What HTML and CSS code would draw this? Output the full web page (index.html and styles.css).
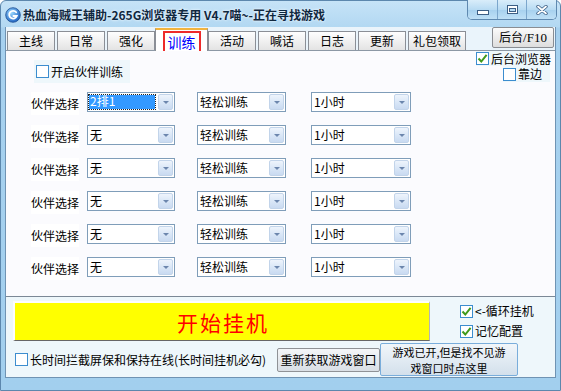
FILE: index.html
```html
<!DOCTYPE html>
<html>
<head>
    <title>热血海贼王辅助</title>
    <link rel="stylesheet" href="styles.css">
</head>
<body>
<div class="window">
    <div class="titlebar">
        <span class="app-icon">
            <svg width="16" height="16" viewBox="0 0 16 16">
                <defs>
                    <radialGradient id="ig" cx="40%" cy="35%" r="70%">
                        <stop offset="0" stop-color="#9ad8ff"/>
                        <stop offset="1" stop-color="#1b5fc0"/>
                    </radialGradient>
                </defs>
                <circle cx="8" cy="8" r="7.3" fill="url(#ig)" stroke="#1d4f92" stroke-width="0.8"/>
                <path d="M11.2 5.3 A3.9 3.9 0 1 0 11.8 9 H8.4" fill="none" stroke="#fff" stroke-width="1.8" stroke-linecap="round"/>
            </svg>
        </span>
        <span class="title">热血海贼王辅助-265G浏览器专用 V4.7喵~-正在寻找游戏</span>
        <div class="caption-buttons">
            <span class="cap cap-min">
                <svg width="12" height="6"><rect x="0.5" y="0.5" width="11" height="4" fill="#fff" stroke="#3d5f85"/></svg>
            </span>
            <span class="cap cap-max">
                <svg width="11" height="9">
                    <rect x="0.5" y="0.5" width="10" height="8" fill="#fff" stroke="#3d5f85"/>
                    <rect x="2.5" y="3.5" width="6" height="3" fill="#b8dcf4" stroke="#3d5f85"/>
                </svg>
            </span>
            <span class="cap cap-close">
                <svg width="12" height="10">
                    <path d="M2 1.5 L10 8.5 M10 1.5 L2 8.5" stroke="#3d5f85" stroke-width="3.4" stroke-linecap="round"/>
                    <path d="M2 1.5 L10 8.5 M10 1.5 L2 8.5" stroke="#fff" stroke-width="1.8" stroke-linecap="round"/>
                </svg>
            </span>
        </div>
    </div>

    <div class="client">
        <div class="tabbar">
            <div class="tabs">
                <span class="tab">主线</span>
                <span class="tab">日常</span>
                <span class="tab">强化</span>
                <span class="tab active"><span class="focus">训练</span></span>
                <span class="tab">活动</span>
                <span class="tab">喊话</span>
                <span class="tab">日志</span>
                <span class="tab">更新</span>
                <span class="tab wide">礼包领取</span>
            </div>
            <button class="btn btn-f10">后台<span class="latin">/F10</span></button>
        </div>

        <div class="page">
            <div class="page-top">
                <label class="check check-partner">
                    <span class="box"></span>开启伙伴训练
                </label>
                <div class="side-opts">
                    <label class="check check-browser">
                        <span class="box"><svg width="11" height="11"><polyline points="1.5,5.5 4.3,8.5 9.6,1.8" fill="none" stroke="#3f9a1c" stroke-width="2"/></svg></span>后台浏览器
                    </label>
                    <label class="check check-edge">
                        <span class="box"></span>靠边
                    </label>
                </div>
            </div>

            <div class="rows">
                <div class="row">
                    <span class="row-label">伙伴选择</span>
                    <span class="combo combo-partner"><span class="combo-text selected">2排1</span><span class="combo-btn"></span></span>
                    <span class="combo combo-mode"><span class="combo-text">轻松训练</span><span class="combo-btn"></span></span>
                    <span class="combo combo-time"><span class="combo-text">1小时</span><span class="combo-btn"></span></span>
                </div>
                <div class="row">
                    <span class="row-label">伙伴选择</span>
                    <span class="combo combo-partner"><span class="combo-text">无</span><span class="combo-btn"></span></span>
                    <span class="combo combo-mode"><span class="combo-text">轻松训练</span><span class="combo-btn"></span></span>
                    <span class="combo combo-time"><span class="combo-text">1小时</span><span class="combo-btn"></span></span>
                </div>
                <div class="row">
                    <span class="row-label">伙伴选择</span>
                    <span class="combo combo-partner"><span class="combo-text">无</span><span class="combo-btn"></span></span>
                    <span class="combo combo-mode"><span class="combo-text">轻松训练</span><span class="combo-btn"></span></span>
                    <span class="combo combo-time"><span class="combo-text">1小时</span><span class="combo-btn"></span></span>
                </div>
                <div class="row">
                    <span class="row-label">伙伴选择</span>
                    <span class="combo combo-partner"><span class="combo-text">无</span><span class="combo-btn"></span></span>
                    <span class="combo combo-mode"><span class="combo-text">轻松训练</span><span class="combo-btn"></span></span>
                    <span class="combo combo-time"><span class="combo-text">1小时</span><span class="combo-btn"></span></span>
                </div>
                <div class="row">
                    <span class="row-label">伙伴选择</span>
                    <span class="combo combo-partner"><span class="combo-text">无</span><span class="combo-btn"></span></span>
                    <span class="combo combo-mode"><span class="combo-text">轻松训练</span><span class="combo-btn"></span></span>
                    <span class="combo combo-time"><span class="combo-text">1小时</span><span class="combo-btn"></span></span>
                </div>
                <div class="row">
                    <span class="row-label">伙伴选择</span>
                    <span class="combo combo-partner"><span class="combo-text">无</span><span class="combo-btn"></span></span>
                    <span class="combo combo-mode"><span class="combo-text">轻松训练</span><span class="combo-btn"></span></span>
                    <span class="combo combo-time"><span class="combo-text">1小时</span><span class="combo-btn"></span></span>
                </div>
            </div>
        </div>

        <div class="bottom">
            <div class="bottom-top">
                <button class="start">开始挂机</button>
                <div class="bottom-checks">
                    <label class="check">
                        <span class="box"><svg width="11" height="11"><polyline points="1.5,5.5 4.3,8.5 9.6,1.8" fill="none" stroke="#3f9a1c" stroke-width="2"/></svg></span>&lt;-循环挂机
                    </label>
                    <label class="check">
                        <span class="box"><svg width="11" height="11"><polyline points="1.5,5.5 4.3,8.5 9.6,1.8" fill="none" stroke="#3f9a1c" stroke-width="2"/></svg></span>记忆配置
                    </label>
                </div>
            </div>
            <div class="bottom-bar">
                <label class="check check-long">
                    <span class="box"></span>长时间拦截屏保和保持在线(长时间挂机必勾)
                </label>
                <button class="btn btn-refetch">重新获取游戏窗口</button>
                <button class="btn btn-find">游戏已开,但是找不见游<br>戏窗口时点这里</button>
            </div>
        </div>
    </div>
</div>
</body>
</html>
```

FILE: styles.css
```css
* {
    box-sizing: border-box;
}

body {
    margin: 0;
    background: #ffffff;
    font-family: "Noto Sans CJK SC", "Liberation Sans", sans-serif;
    font-size: 12px;
    color: #000;
}

.window {
    width: 561px;
    height: 391px;
    display: flex;
    flex-direction: column;
    padding: 0 4px 12px 4px;
    background: linear-gradient(to bottom, #c6e3f7, #b2d8f2 26px, #a7d1ef 27px, #a2cfee);
    border: 1px solid #5c87ad;
    border-radius: 6px 6px 0 0;
}

/* title bar */
.titlebar {
    height: 26px;
    display: flex;
    align-items: flex-start;
}

.app-icon {
    margin-top: 6px;
    width: 16px;
    height: 16px;
}

.app-icon svg {
    display: block;
}

.title {
    margin: 5px 0 0 2px;
    line-height: 17px;
    font-weight: bold;
    font-size: 12px;
    color: #10283f;
    text-shadow: 0 0 3px #e8f5ff, 0 0 2px #e8f5ff;
    white-space: nowrap;
}

.caption-buttons {
    margin: -1px -1px 0 auto;
    display: flex;
    border: 1px solid #5f89b0;
    border-top: none;
    border-radius: 0 0 5px 5px;
    overflow: hidden;
    box-shadow: inset 0 0 0 1px rgba(255,255,255,0.5);
}

.cap {
    height: 19px;
    display: flex;
    align-items: center;
    justify-content: center;
    background: linear-gradient(to bottom, #d9edfa, #b8dbf3 50%, #a6d0ee 51%, #bfe0f6);
    border-left: 1px solid #7ba6cc;
}

.cap:first-child {
    border-left: none;
}

.cap svg {
    display: block;
}

.cap-min {
    width: 29px;
    padding-top: 6px;
}

.cap-max {
    width: 29px;
}

.cap-close {
    width: 30px;
}

/* client */
.client {
    flex: 1;
    display: flex;
    flex-direction: column;
    border-left: 1px solid #6f93b3;
    border-right: 1px solid #6f93b3;
    border-bottom: 1px solid #6f93b3;
}

.tabbar {
    height: 23px;
    display: flex;
    align-items: flex-end;
    background: #eaf4fb;
}

.tabs {
    display: flex;
    align-items: flex-end;
    padding-left: 1px;
    position: relative;
    z-index: 1;
}

.tab {
    width: 48px;
    height: 19px;
    margin-right: 2px;
    line-height: 18px;
    text-align: center;
    border: 1px solid #8b8f96;
    border-bottom: none;
    background: linear-gradient(to bottom, #fefefe, #f1f1f1 50%, #e3e3e3);
}

.tab.wide {
    width: 58px;
}

.tab.active {
    width: 53px;
    height: 23px;
    margin: 0 0 -1px -2px;
    background: #ffffff;
    border-top: 2px solid #f1b33e;
    display: flex;
    justify-content: center;
    padding-top: 1px;
}

.focus {
    display: block;
    width: 38px;
    border: 2px solid #ee2a2a;
    border-bottom: none;
    color: #0000ff;
    font-size: 14px;
    line-height: 18px;
}

.btn {
    font-family: "Noto Sans CJK SC", "Liberation Sans", sans-serif;
    font-size: 12px;
    color: #000;
    padding: 0;
    cursor: pointer;
}

.btn-f10 {
    width: 62px;
    height: 21px;
    margin: 0 1px 2px auto;
    line-height: 18px;
    border: 1px solid #8a8d92;
    border-radius: 2px;
    background: linear-gradient(to bottom, #fbfbfb, #ececec 50%, #dedede);
}

.latin {
    font-family: "Liberation Serif", serif;
    font-size: 13px;
}

/* training page */
.page {
    height: 247px;
    background: #fbfbfe;
    border-top: 1px solid #8c98a5;
    border-bottom: 1px solid #7b8896;
}

.page-top {
    height: 41px;
    display: flex;
    align-items: flex-start;
}

.check {
    display: inline-flex;
    align-items: center;
    gap: 2px;
    line-height: 14px;
    white-space: nowrap;
    background: #eef7fb;
}

.box {
    width: 13px;
    height: 13px;
    flex: none;
    display: flex;
    align-items: center;
    justify-content: center;
    background: #fff;
    border: 1px solid #3c8dcf;
}

.box svg {
    display: block;
}

.check-partner {
    margin: 9px 0 0 28px;
    width: 96px;
    height: 23px;
    padding-left: 2px;
}

.side-opts {
    margin: 0 5px 0 auto;
    display: flex;
    flex-direction: column;
    align-items: flex-end;
}

.check-browser {
    width: 74px;
    height: 15px;
}

.check-edge {
    width: 47px;
    height: 16px;
}

.rows {
    display: flex;
    flex-direction: column;
    gap: 10px;
    padding-left: 25px;
}

.row {
    display: flex;
    align-items: flex-start;
    height: 23px;
}

.row-label {
    width: 48px;
    height: 23px;
    line-height: 24px;
    background: #ffffff;
}

.combo {
    height: 20px;
    display: flex;
    background: #ffffff;
    border: 1px solid #7f9db9;
}

.combo-partner {
    width: 88px;
    margin-left: 8px;
}

.combo-mode {
    width: 89px;
    margin-left: 22px;
}

.combo-time {
    width: 100px;
    margin-left: 25px;
}

.combo-text {
    flex: 1;
    padding-left: 2px;
    line-height: 18px;
}

.combo-text.selected {
    margin: 2px 2px 2px 1px;
    padding-left: 1px;
    line-height: 12px;
    color: #fff;
    background: #3399ff;
    outline: 1px dotted #222;
}

.combo-btn {
    width: 15px;
    height: 16px;
    margin: 1px;
    display: flex;
    align-items: center;
    justify-content: center;
    border: 1px solid #c2d4ea;
    border-radius: 2px;
    background: linear-gradient(to bottom, #eef4fc, #dae7f7 50%, #c9daf1);
}

.combo-btn::after {
    content: "";
    border-left: 3px solid transparent;
    border-right: 3px solid transparent;
    border-top: 3px solid #6c86ad;
}

/* bottom area */
.bottom {
    flex: 1;
    display: flex;
    flex-direction: column;
    padding: 4px 0 0 7px;
    background: #eef7fb;
}

.bottom-top {
    height: 40px;
    display: flex;
}

.start {
    width: 417px;
    height: 40px;
    padding: 0 0 0 2px;
    border-style: solid;
    border-width: 2px 1px 1px 2px;
    border-color: #fdfdfd #b4b4b4 #666 #fdfdfd;
    background: #ffff00;
    color: #ff0000;
    font-family: "Noto Sans CJK SC", sans-serif;
    font-size: 21px;
    letter-spacing: 2px;
    line-height: 36px;
}

.bottom-checks {
    margin-left: 30px;
    padding-top: 3px;
    display: flex;
    flex-direction: column;
    gap: 6px;
}

.bottom-checks .check {
    background: none;
    height: 14px;
}

.bottom-bar {
    flex: 1;
    display: flex;
    align-items: center;
    padding-top: 1px;
}

.check-long {
    width: 262px;
    margin-left: 2px;
    background: none;
}

.btn-refetch {
    width: 103px;
    height: 24px;
    line-height: 20px;
    border: 1px solid #8f9296;
    border-radius: 2px;
    background: linear-gradient(to bottom, #f4f6f8, #e6eaee 50%, #d9dfe5);
}

.btn-find {
    width: 138px;
    height: 33px;
    font-size: 11px;
    line-height: 16px;
    border: 1px solid #79addb;
    border-radius: 2px;
    background: linear-gradient(to bottom, #f1f6fa, #e2ebf3 50%, #d3e0eb);
}
```
